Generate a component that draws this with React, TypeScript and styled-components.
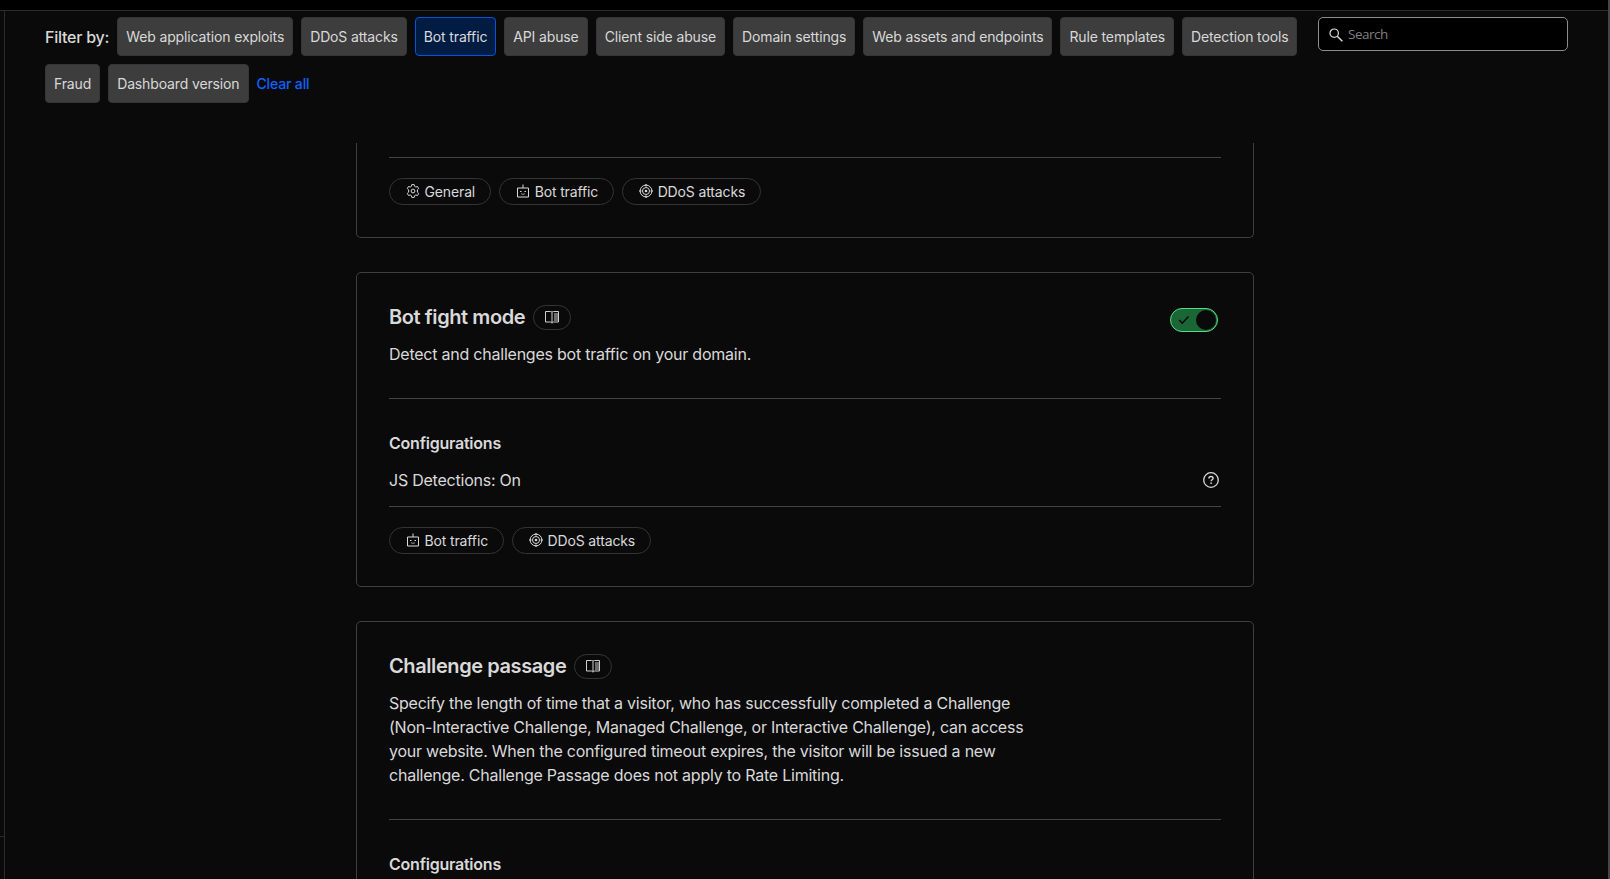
import React from "react";
import styled, { createGlobalStyle } from "styled-components";

const GlobalStyle = createGlobalStyle`
  *, *::before, *::after { box-sizing: border-box; }
  html, body { margin: 0; padding: 0; background: #0a0a0a; overflow: hidden; }
  body { font-family: Inter, "Liberation Sans", sans-serif; color: #d9d9d9; font-size: 16px; line-height: 24px; letter-spacing: -0.23px; }
  h2, h3, p { margin: 0; }
`;

const Shell = styled.div`
  display: grid;
  grid-template: 11px 1fr / 5px 1fr 2px;
  width: 100vw;
  height: 100vh;
  overflow: hidden;
`;

const TopBar = styled.header`
  grid-column: 1 / 3;
  background: #000;
  border-bottom: 1px solid #2c2c2c;
`;

const ScrollTrack = styled.div`
  grid-column: 3;
  grid-row: 1 / 3;
  background: #464646;
`;

const SideRail = styled.aside`
  grid-column: 1;
  grid-row: 2;
  border-right: 1px solid #2c2c2c;
  display: flex;
  flex-direction: column;
  justify-content: flex-end;
`;

const RailFooter = styled.div`
  height: 43px;
  border-top: 1px solid #2c2c2c;
`;

const Main = styled.main`
  grid-column: 2;
  grid-row: 2;
  min-height: 0;
  display: flex;
  flex-direction: column;
`;

const Toolbar = styled.div`
  display: flex;
  justify-content: space-between;
  align-items: flex-start;
  height: 132px;
  flex: none;
  padding: 6px 40px 0;
`;

const Filters = styled.div`
  display: flex;
  flex-wrap: wrap;
  align-items: center;
  gap: 8px;
  width: 1262px;
`;

const FilterLabel = styled.span`
  font-size: 16px;
  line-height: 24px;
  font-weight: 500;
`;

const FilterButton = styled.button<{ $active?: boolean }>`
  height: 39px;
  padding: 0 8px;
  border: 1px solid ${(p) => (p.$active ? "#0055dc" : "#363636")};
  border-radius: 4px;
  background: ${(p) => (p.$active ? "#001c43" : "#3d3d3d")};
  color: #d9d9d9;
  font: 400 14px/21px Inter, sans-serif;
  letter-spacing: -0.135px;
  white-space: nowrap;
`;

const ClearLink = styled.a`
  color: #0f62fe;
  font-size: 14px;
  line-height: 21px;
  font-weight: 500;
  letter-spacing: -0.15px;
`;

const SearchBox = styled.label`
  display: flex;
  align-items: center;
  gap: 5px;
  width: 250px;
  height: 34px;
  padding: 0 10px;
  border: 1px solid #8d8d8d;
  border-radius: 5px;
  background: #000;
  svg { margin-top: 2px; }
`;

const SearchInput = styled.input`
  flex: 1;
  min-width: 0;
  padding: 0;
  border: 0;
  outline: 0;
  background: transparent;
  font: 400 13.5px/20px "Open Sans", sans-serif;
  letter-spacing: -0.5px;
  &::placeholder { color: #808080; opacity: 1; }
`;

const Viewport = styled.div`
  flex: 1;
  min-height: 0;
  overflow: hidden;
  display: flex;
  flex-direction: column;
  align-items: center;
  gap: 34px;
  padding-right: 3px;
`;

const Card = styled.section<{ $continued?: boolean }>`
  flex: none;
  width: 898px;
  padding: ${(p) => (p.$continued ? "14px 32px 32px" : "32px")};
  border: 1px solid #3f3f3f;
  border-top-width: ${(p) => (p.$continued ? 0 : "1px")};
  border-radius: ${(p) => (p.$continued ? "0 0 5px 5px" : "5px")};
`;

const CardHeader = styled.div`
  display: flex;
  justify-content: space-between;
  align-items: flex-start;
`;

const TitleRow = styled.div`
  display: flex;
  align-items: center;
  gap: 8px;
  height: 25px;
`;

const Title = styled.h2`
  font-size: 20px;
  line-height: 25px;
  font-weight: 600;
  letter-spacing: -0.41px;
`;

const DocsPill = styled.span`
  display: flex;
  align-items: center;
  justify-content: center;
  width: 38px;
  height: 25px;
  border: 1px solid #343434;
  border-radius: 13px;
  svg { margin-bottom: 1px; }
`;

const Description = styled.p`
  max-width: 640px;
  margin-top: 12px;
`;

const Divider = styled.hr`
  height: 1px;
  margin: 0;
  border: 0;
  background: #454545;
`;

const SectionDivider = styled(Divider)`
  margin: 32px 0;
`;

const SectionTitle = styled.h3`
  font-size: 16px;
  line-height: 24px;
  font-weight: 600;
`;

const SettingRow = styled.div`
  display: flex;
  justify-content: space-between;
  align-items: center;
  height: 24px;
  margin: 13px 0 14px;
  padding-right: 2px;
`;

const Chips = styled.div`
  display: flex;
  gap: 8px;
  margin-top: 20px;
`;

const Chip = styled.span`
  display: flex;
  align-items: center;
  gap: 4.5px;
  height: 27px;
  padding: 0 15px 0 16px;
  border: 1px solid #343434;
  border-radius: 14px;
  font-size: 14px;
  line-height: 21px;
  letter-spacing: -0.135px;
  svg { margin-bottom: 1px; }
`;

const Switch = styled.button`
  display: flex;
  align-items: center;
  justify-content: space-between;
  width: 48px;
  height: 24px;
  margin: 3px 3px 0 0;
  padding: 0 1px 0 7px;
  border: 1px solid #55dc88;
  border-radius: 12px;
  background: #1b6635;
`;

const Knob = styled.span`
  width: 20px;
  height: 20px;
  border-radius: 50%;
  background: #0a0a0a;
`;

const GearIcon = () => (
  <svg width="14" height="14" viewBox="0 0 14 14" fill="none" stroke="#d9d9d9" strokeWidth="1" strokeLinejoin="round">
    <path d="M5.800.6h2.400l.4 1.700 1.200.7 1.700-.5 1.200 2.100-1.300 1.200v2.400l1.300 1.200-1.200 2.100-1.700-.5-1.200.7-.4 1.700H5.800l-.4-1.700-1.200-.7-1.700.5-1.200-2.100 1.300-1.200V5.800L1.300 4.600l1.200-2.100 1.700.5 1.200-.7z" />
    <circle cx="7" cy="7" r="1.900" />
  </svg>
);

const BotIcon = () => (
  <svg width="14" height="14" viewBox="0 0 14 14" fill="none" stroke="#d9d9d9">
    <path d="M1.500 4h11v9h-11zM7 .5V4" />
    <path d="M4 7.500h1.500M8.500 7.500H10" strokeWidth="1.200" />
    <path d="M5 9.700q2 1.400 4 0" strokeWidth=".9" opacity=".75" />
  </svg>
);

const TargetIcon = () => (
  <svg width="14" height="14" viewBox="0 0 14 14" fill="none" stroke="#d9d9d9">
    <circle cx="7" cy="7" r="5.900" />
    <circle cx="7" cy="7" r="3.500" />
    <circle cx="7" cy="7" r="1.300" fill="#d9d9d9" stroke="none" />
    <path d="M7 0v2.500M7 11.500V14M0 7h2.500M11.500 7H14" strokeWidth="1.200" />
  </svg>
);

const BookIcon = () => (
  <svg width="14" height="14" viewBox="0 0 14 14" fill="none" stroke="#cfcfcf">
    <path d="M.5 1.500h5q1 0 1.500.6.500-.6 1.500-.6h5v10.500H8.500q-1 0-1.500.7-.500-.7-1.500-.7h-5zM7 2v11.500" />
    <path d="M9 4H13M9 6H13M9 8H13M9 10H13" />
  </svg>
);

const SearchIcon = () => (
  <svg width="14" height="14" viewBox="0 0 14 14" fill="none" stroke="#d9d9d9" strokeWidth="1.200">
    <circle cx="5.200" cy="5.200" r="4.200" />
    <path d="M8.200 8.200l5.200 5" strokeWidth="1.500" />
  </svg>
);

const CheckIcon = () => (
  <svg width="12" height="10" viewBox="0 0 12 10" fill="none" stroke="#0a0a0a" strokeWidth="1.500">
    <path d="M1.200 5l3 3.200L10.500 1.500" />
  </svg>
);

const HelpIcon = () => (
  <svg width="16" height="16" viewBox="0 0 16 16" fill="none" stroke="#d9d9d9">
    <circle cx="8" cy="8" r="7.300" strokeWidth="1.300" />
    <path d="M5.900 6.400c0-1.200.9-1.900 2.100-1.900s2.100.7 2.100 1.800c0 1.500-2 1.500-2 3" strokeWidth="1.400" />
    <path d="M8.100 10.400v1.500" strokeWidth="1.500" />
  </svg>
);

const filters = [
  "Web application exploits",
  "DDoS attacks",
  "Bot traffic",
  "API abuse",
  "Client side abuse",
  "Domain settings",
  "Web assets and endpoints",
  "Rule templates",
  "Detection tools",
  "Fraud",
  "Dashboard version",
];

const chipIcons = { General: GearIcon, "Bot traffic": BotIcon, "DDoS attacks": TargetIcon };
type Tag = keyof typeof chipIcons;

const TagList = ({ tags }: { tags: Tag[] }) => (
  <Chips>
    {tags.map((tag) => {
      const Icon = chipIcons[tag];
      return (
        <Chip key={tag}>
          <Icon />
          {tag}
        </Chip>
      );
    })}
  </Chips>
);

const CardTitle = ({ children }: { children: React.ReactNode }) => (
  <TitleRow>
    <Title>{children}</Title>
    <DocsPill>
      <BookIcon />
    </DocsPill>
  </TitleRow>
);

export default function App() {
  return (
    <Shell>
      <GlobalStyle />
      <TopBar />
      <ScrollTrack />
      <SideRail>
        <RailFooter />
      </SideRail>
      <Main>
        <Toolbar>
          <Filters>
            <FilterLabel>Filter by:</FilterLabel>
            {filters.map((name) => (
              <FilterButton key={name} $active={name === "Bot traffic"}>
                {name}
              </FilterButton>
            ))}
            <ClearLink>Clear all</ClearLink>
          </Filters>
          <SearchBox>
            <SearchIcon />
            <SearchInput placeholder="Search" />
          </SearchBox>
        </Toolbar>
        <Viewport>
          <Card $continued>
            <Divider />
            <TagList tags={["General", "Bot traffic", "DDoS attacks"]} />
          </Card>
          <Card>
            <CardHeader>
              <div>
                <CardTitle>Bot fight mode</CardTitle>
                <Description>Detect and challenges bot traffic on your domain.</Description>
              </div>
              <Switch aria-label="Bot fight mode">
                <CheckIcon />
                <Knob />
              </Switch>
            </CardHeader>
            <SectionDivider />
            <SectionTitle>Configurations</SectionTitle>
            <SettingRow>
              JS Detections: On
              <HelpIcon />
            </SettingRow>
            <Divider />
            <TagList tags={["Bot traffic", "DDoS attacks"]} />
          </Card>
          <Card>
            <CardTitle>Challenge passage</CardTitle>
            <Description>
              Specify the length of time that a visitor, who has successfully completed a Challenge
              (Non-Interactive Challenge, Managed Challenge, or Interactive Challenge), can access your
              website. When the configured timeout expires, the visitor will be issued a new challenge.
              Challenge Passage does not apply to Rate Limiting.
            </Description>
            <SectionDivider />
            <SectionTitle>Configurations</SectionTitle>
          </Card>
        </Viewport>
      </Main>
    </Shell>
  );
}
